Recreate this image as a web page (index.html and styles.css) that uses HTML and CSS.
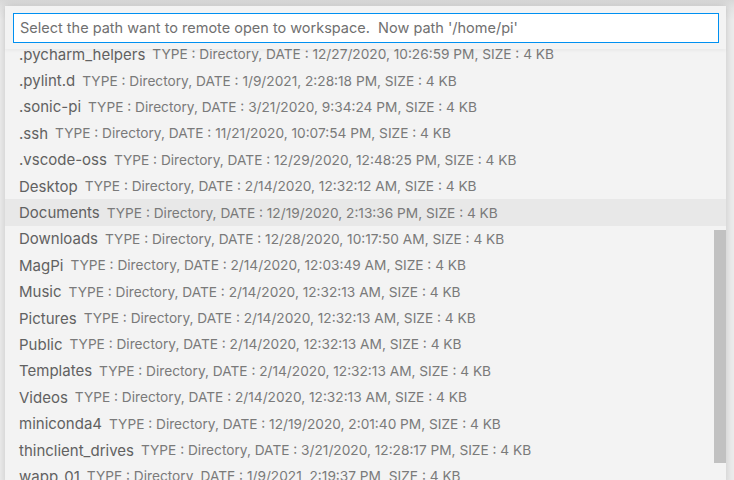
FILE: index.html
```html
<!DOCTYPE html>
<html>
<head>
<meta charset="utf-8">
<link rel="stylesheet" href="styles.css">
</head>
<body>
<div class="widget">
  <div class="header">
    <div class="input">Select the path want to remote open to workspace.&nbsp; Now path '/home/pi'</div>
  </div>
  <div class="list">
    <div class="rows">
      <div class="row"><span class="label">.pycharm_helpers</span><span class="desc">TYPE : Directory, DATE : 12/27/2020, 10:26:59 PM, SIZE : 4 KB</span></div>
      <div class="row"><span class="label">.pylint.d</span><span class="desc">TYPE : Directory, DATE : 1/9/2021, 2:28:18 PM, SIZE : 4 KB</span></div>
      <div class="row"><span class="label">.sonic-pi</span><span class="desc">TYPE : Directory, DATE : 3/21/2020, 9:34:24 PM, SIZE : 4 KB</span></div>
      <div class="row"><span class="label">.ssh</span><span class="desc">TYPE : Directory, DATE : 11/21/2020, 10:07:54 PM, SIZE : 4 KB</span></div>
      <div class="row"><span class="label">.vscode-oss</span><span class="desc">TYPE : Directory, DATE : 12/29/2020, 12:48:25 PM, SIZE : 4 KB</span></div>
      <div class="row"><span class="label">Desktop</span><span class="desc">TYPE : Directory, DATE : 2/14/2020, 12:32:12 AM, SIZE : 4 KB</span></div>
      <div class="row active"><span class="label">Documents</span><span class="desc">TYPE : Directory, DATE : 12/19/2020, 2:13:36 PM, SIZE : 4 KB</span></div>
      <div class="row"><span class="label">Downloads</span><span class="desc">TYPE : Directory, DATE : 12/28/2020, 10:17:50 AM, SIZE : 4 KB</span></div>
      <div class="row"><span class="label">MagPi</span><span class="desc">TYPE : Directory, DATE : 2/14/2020, 12:03:49 AM, SIZE : 4 KB</span></div>
      <div class="row"><span class="label">Music</span><span class="desc">TYPE : Directory, DATE : 2/14/2020, 12:32:13 AM, SIZE : 4 KB</span></div>
      <div class="row"><span class="label">Pictures</span><span class="desc">TYPE : Directory, DATE : 2/14/2020, 12:32:13 AM, SIZE : 4 KB</span></div>
      <div class="row"><span class="label">Public</span><span class="desc">TYPE : Directory, DATE : 2/14/2020, 12:32:13 AM, SIZE : 4 KB</span></div>
      <div class="row"><span class="label">Templates</span><span class="desc">TYPE : Directory, DATE : 2/14/2020, 12:32:13 AM, SIZE : 4 KB</span></div>
      <div class="row"><span class="label">Videos</span><span class="desc">TYPE : Directory, DATE : 2/14/2020, 12:32:13 AM, SIZE : 4 KB</span></div>
      <div class="row"><span class="label">miniconda4</span><span class="desc">TYPE : Directory, DATE : 12/19/2020, 2:01:40 PM, SIZE : 4 KB</span></div>
      <div class="row"><span class="label">thinclient_drives</span><span class="desc">TYPE : Directory, DATE : 3/21/2020, 12:28:17 PM, SIZE : 4 KB</span></div>
      <div class="row"><span class="label">wapp_01</span><span class="desc">TYPE : Directory, DATE : 1/9/2021, 2:19:37 PM, SIZE : 4 KB</span></div>
    </div>
    <div class="scrollbar"></div>
  </div>
</div>
</body>
</html>
```
FILE: styles.css
```css
html, body {
  margin: 0;
  padding: 0;
  height: 100%;
  overflow: hidden;
}
body {
  background: linear-gradient(#d8d8d8, #e4e4e4 8px, #ececec 20px);
  font-family: Inter, "Liberation Sans", sans-serif;
}
.widget {
  margin: 6px 0 0 5px;
  width: 721px;
  height: 480px;
  background: #f3f3f3;
  box-shadow: 0 0 8px rgba(0, 0, 0, 0.16);
  display: flex;
  flex-direction: column;
}
.header {
  position: relative;
  z-index: 2;
  background: #f3f3f3;
  padding: 7px 7px 6px 8px;
  box-shadow: 0 2px 3px rgba(0, 0, 0, 0.04);
}
.input {
  height: 28px;
  border: 1px solid #0090f1;
  background: #fff;
  color: #707070;
  font-size: 14.5px;
  line-height: 28px;
  padding-left: 6px;
  white-space: nowrap;
}
.list {
  position: relative;
  flex: 1;
  overflow: hidden;
}
.rows {
  margin-top: -8px;
}
.row {
  height: 26.4px;
  display: flex;
  align-items: center;
  padding-left: 14px;
  white-space: nowrap;
}
.row.active {
  background: #e8e8e8;
}
.label {
  color: #616161;
  font-size: 15px;
}
.desc {
  color: #7a7a7a;
  font-size: 13.7px;
  margin-left: 7px;
}
.scrollbar {
  position: absolute;
  right: 0;
  top: 181px;
  width: 12px;
  height: 233px;
  background: #c1c1c1;
}
```
